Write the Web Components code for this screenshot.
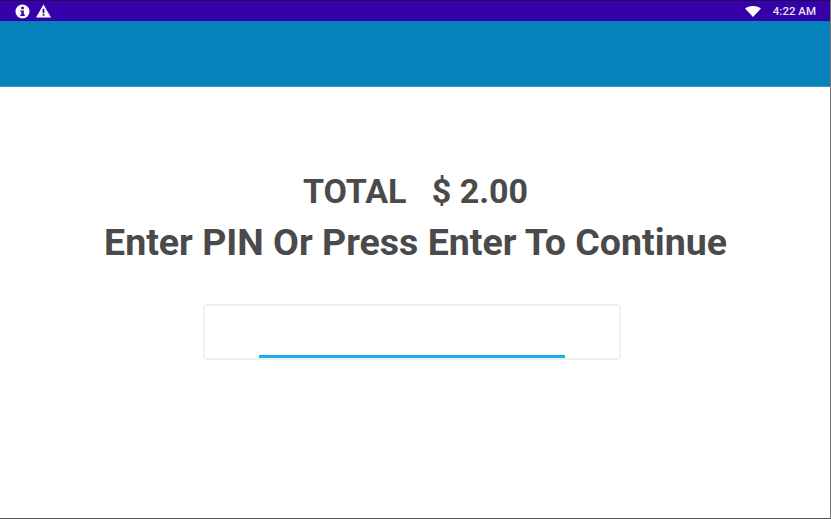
<!DOCTYPE html>
<html>
<head>
<meta charset="utf-8">
<title>PIN entry</title>
<style>
  html, body { margin:0; padding:0; height:100%; background:#fff; overflow:hidden; }
  body { font-family:Roboto, sans-serif; }
</style>
</head>
<body>
<pin-screen>
  <status-bar time="4:22 AM"></status-bar>
  <app-bar></app-bar>
  <pin-prompt total="$ 2.00" message="Enter PIN Or Press Enter To Continue"></pin-prompt>
  <pin-field></pin-field>
</pin-screen>
<script>
class PinScreen extends HTMLElement {
    constructor(){
        super();
        this.attachShadow({mode:'open'});
        this.shadowRoot.innerHTML = `
        <style>
            :host{
                display:flex;
                flex-direction:column;
                box-sizing:border-box;
                width:831px;
                height:519px;
                background:#fff;
                border-right:1px solid #777;
                border-bottom:1px solid #555;
            }
        </style>
        <slot></slot>`;
    }
}

class StatusBar extends HTMLElement {
    constructor(){
        super();
        this.attachShadow({mode:'open'});
        this.shadowRoot.innerHTML = `
        <style>
            :host{
                display:flex;
                align-items:center;
                box-sizing:border-box;
                height:21px;
                padding:0 14px 0 15px;
                background:#3700a8;
                border-top:1px solid #1d0a55;
                color:#e6e0f4;
                font:500 11.5px Roboto, sans-serif;
            }
            svg{ display:block; }
            .left{ display:flex; align-items:center; gap:6px; }
            .right{ margin-left:auto; display:flex; align-items:center; gap:12px; }
        </style>
        <div class="left">
            <svg width="15" height="15" viewBox="0 0 15 15">
                <circle cx="7.5" cy="7.5" r="7" fill="#fff"/>
                <rect x="6.2" y="2.8" width="2.6" height="2.4" fill="#3700a8"/>
                <path d="M5.4 6.4h3.4v4.2h1v1.4H5.4v-1.4h1V7.8h-1z" fill="#3700a8"/>
            </svg>
            <svg width="15" height="14" viewBox="0 0 15 14">
                <path d="M7.5 .6 15 13.4H0z" fill="#fff"/>
                <rect x="6.6" y="4.8" width="1.8" height="4.4" fill="#3700a8"/>
                <rect x="6.6" y="10" width="1.8" height="1.7" fill="#3700a8"/>
            </svg>
        </div>
        <div class="right">
            <svg width="16" height="11" viewBox="0 0 16 11">
                <path d="M0 2.6C2 .9 4.8 0 8 0s6 .9 8 2.6L8 11z" fill="#fff"/>
            </svg>
            <span>${this.getAttribute('time')}</span>
        </div>`;
    }
}

class AppBar extends HTMLElement {
    constructor(){
        super();
        this.attachShadow({mode:'open'});
        this.shadowRoot.innerHTML = `
        <style>
            :host{
                display:block;
                box-sizing:border-box;
                height:66px;
                background:#0582bb;
                border-bottom:1px solid #3a9bc9;
            }
        </style>`;
    }
}

class PinPrompt extends HTMLElement {
    constructor(){
        super();
        this.attachShadow({mode:'open'});
        this.shadowRoot.innerHTML = `
        <style>
            :host{
                display:flex;
                flex-direction:column;
                align-items:center;
                gap:10px;
                padding:85px 0 0;
                color:#4a4a4a;
                font-family:Roboto, sans-serif;
                font-weight:700;
                white-space:pre;
            }
            .total{ font-size:34px; line-height:38px; margin-left:1px; }
            .message{ font-size:37.5px; line-height:44px; margin-left:1px; }
        </style>
        <div class="total">TOTAL   ${this.getAttribute('total')}</div>
        <div class="message">${this.getAttribute('message')}</div>`;
    }
}

class PinField extends HTMLElement {
    constructor(){
        super();
        this.attachShadow({mode:'open'});
        this.shadowRoot.innerHTML = `
        <style>
            :host{
                display:flex;
                align-items:flex-end;
                justify-content:center;
                box-sizing:border-box;
                width:418px;
                height:56px;
                margin:40px 0 0 203px;
                background:#fff;
                border:2px solid #f0f0f0;
                border-radius:4px;
            }
            .line{ width:306px; height:3px; background:#14b1f0; }
        </style>
        <div class="line"></div>`;
    }
}

customElements.define('pin-screen', PinScreen);
customElements.define('status-bar', StatusBar);
customElements.define('app-bar', AppBar);
customElements.define('pin-prompt', PinPrompt);
customElements.define('pin-field', PinField);
</script>
</body>
</html>
